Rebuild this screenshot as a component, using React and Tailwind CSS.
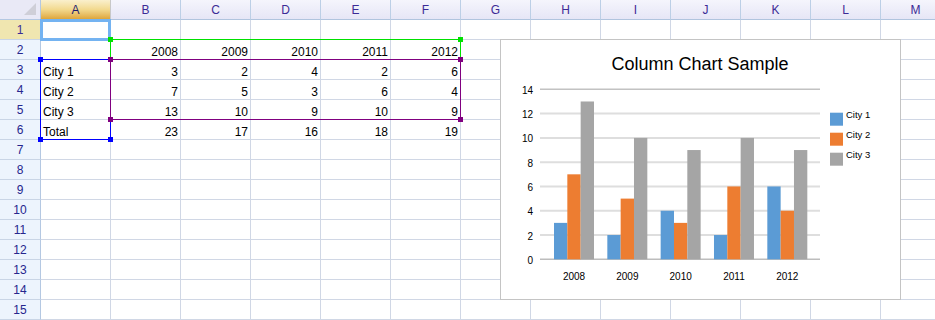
import React from 'react';

const COLS = ['A', 'B', 'C', 'D', 'E', 'F', 'G', 'H', 'I', 'J', 'K', 'L', 'M'];
const ROW_COUNT = 15;

const cells = {
  B2: '2008', C2: '2009', D2: '2010', E2: '2011', F2: '2012',
  A3: 'City 1', B3: '3', C3: '2', D3: '4', E3: '2', F3: '6',
  A4: 'City 2', B4: '7', C4: '5', D4: '3', E4: '6', F4: '4',
  A5: 'City 3', B5: '13', C5: '10', D5: '9', E5: '10', F5: '9',
  A6: 'Total', B6: '23', C6: '17', D6: '16', E6: '18', F6: '19',
};

const series = [
  { name: 'City 1', color: '#5b9bd5', values: [3, 2, 4, 2, 6] },
  { name: 'City 2', color: '#ed7d31', values: [7, 5, 3, 6, 4] },
  { name: 'City 3', color: '#a5a5a5', values: [13, 10, 9, 10, 9] },
];
const years = ['2008', '2009', '2010', '2011', '2012'];

// plot scale (px inside the chart box)
const y0 = 219.3;
const unit = 12.14;
const yOf = (v) => y0 - v * unit;

function ColumnChart() {
  return (
    <div className="absolute left-[500px] top-[39px] w-[401px] h-[261px] border border-[#c4c4c4] bg-white">
      <svg width="399" height="259" className="block font-['Liberation_Sans',Arial,sans-serif]">
        <text x="199" y="29.5" textAnchor="middle" fontSize="18" fill="#000">Column Chart Sample</text>

        {/* grid */}
        {[2, 4, 6, 8, 10, 12].map((v) => (
          <line key={v} x1="39" x2="319" y1={yOf(v)} y2={yOf(v)} stroke="#dedede" strokeWidth="2" />
        ))}
        <line x1="39" x2="319" y1={yOf(14)} y2={yOf(14)} stroke="#c2c2c2" strokeWidth="1.5" />
        <line x1="39" x2="319" y1={y0} y2={y0} stroke="#bdbdbd" strokeWidth="1.5" />

        {[0, 2, 4, 6, 8, 10, 12, 14].map((v) => (
          <text key={v} x="32" y={yOf(v) + 4.5} textAnchor="end" fontSize="10" fill="#000">{v}</text>
        ))}

        {/* bars */}
        {years.map((yr, i) => (
          <g key={yr}>
            {series.map((s, j) => (
              <rect
                key={s.name}
                x={53 + i * 53.33 + j * 13.33}
                y={yOf(s.values[i])}
                width="13.33"
                height={s.values[i] * unit}
                fill={s.color}
              />
            ))}
            <text x={73 + i * 53.33} y="240" textAnchor="middle" fontSize="10" fill="#000">{yr}</text>
          </g>
        ))}

        {/* legend */}
        {series.map((s, j) => (
          <g key={s.name}>
            <rect x="329" y={72.7 + j * 20} width="13" height="13" fill={s.color} />
            <text x="345" y={77.5 + j * 20} fontSize="9.5" fill="#000">{s.name}</text>
          </g>
        ))}
      </svg>
    </div>
  );
}

// range outline with small square handles on its corners
function Range({ box, color, handleColor }) {
  return (
    <div className={`absolute border ${box} ${color}`}>
      <div className={`absolute -left-[3px] -top-[3px] w-[5px] h-[5px] ${handleColor}`} />
      <div className={`absolute -right-[3px] -top-[3px] w-[5px] h-[5px] ${handleColor}`} />
      <div className={`absolute -left-[3px] -bottom-[3px] w-[5px] h-[5px] ${handleColor}`} />
      <div className={`absolute -right-[3px] -bottom-[3px] w-[5px] h-[5px] ${handleColor}`} />
    </div>
  );
}

export default function App() {
  const numeric = (v) => /^\d+$/.test(v);

  return (
    <div className="relative w-[935px] h-[320px] overflow-hidden bg-white font-['Liberation_Sans',Arial,sans-serif]">
      <div className="grid grid-cols-[41px_repeat(13,70px)] grid-rows-[20px_repeat(15,20px)]">
        {/* corner */}
        <div className="relative bg-[#e9e9f6] border-r border-b border-[#b4c8e2]">
          <svg width="12" height="12" className="absolute right-[4px] bottom-[4px]">
            <polygon points="12,0 12,12 0,12" fill="#cfcfd8" />
          </svg>
        </div>

        {/* column headers */}
        {COLS.map((c) => (
          <div
            key={c}
            className={`flex items-center justify-center text-[12px] border-r border-b ${
              c === 'A'
                ? 'bg-linear-to-b from-[#faf0cc] via-[#f2d98e] to-[#dea63a] border-r-[#c8c8c8] border-b-[#b08830] text-[#1e1e6e]'
                : 'bg-linear-to-b from-[#f5f5fc] to-[#e6e6f6] border-r-[#bccfe6] border-b-[#b0c4de] text-[#3b2b96]'
            }`}
          >
            {c}
          </div>
        ))}

        {Array.from({ length: ROW_COUNT }, (_, r) => {
          const row = r + 1;
          return (
            <React.Fragment key={row}>
              <div
                className={`flex items-center justify-center text-[12px] border-r border-b border-r-[#b4c8e2] border-b-[#c9d5e6] ${
                  row === 1 ? 'bg-[#f0e6b0] text-[#3b2b96]' : 'bg-[#edf4fd] text-[#26268e]'
                }`}
              >
                {row}
              </div>
              {COLS.map((c) => {
                const v = cells[c + row];
                return (
                  <div
                    key={c}
                    className={`flex items-end text-[12px] leading-[14px] text-black px-[2px] border-r border-b border-[#d0d7e5] ${
                      v && numeric(v) ? 'justify-end' : 'justify-start'
                    }`}
                  >
                    {v}
                  </div>
                );
              })}
            </React.Fragment>
          );
        })}
      </div>

      {/* active cell A1 */}
      <div className="absolute left-[40px] top-[19px] w-[71px] h-[22px] border-[3px] border-[#74b3f1]" />

      {/* chart source ranges */}
      <Range box="left-[110px] top-[39px] w-[351px] h-[21px]" color="border-[#00e000]" handleColor="bg-[#00e000]" />
      <Range box="left-[40px] top-[59px] w-[71px] h-[81px]" color="border-[#0000ff]" handleColor="bg-[#0000ff]" />
      <Range box="left-[110px] top-[59px] w-[351px] h-[61px]" color="border-[#800080]" handleColor="bg-[#800080]" />

      <ColumnChart />
    </div>
  );
}
